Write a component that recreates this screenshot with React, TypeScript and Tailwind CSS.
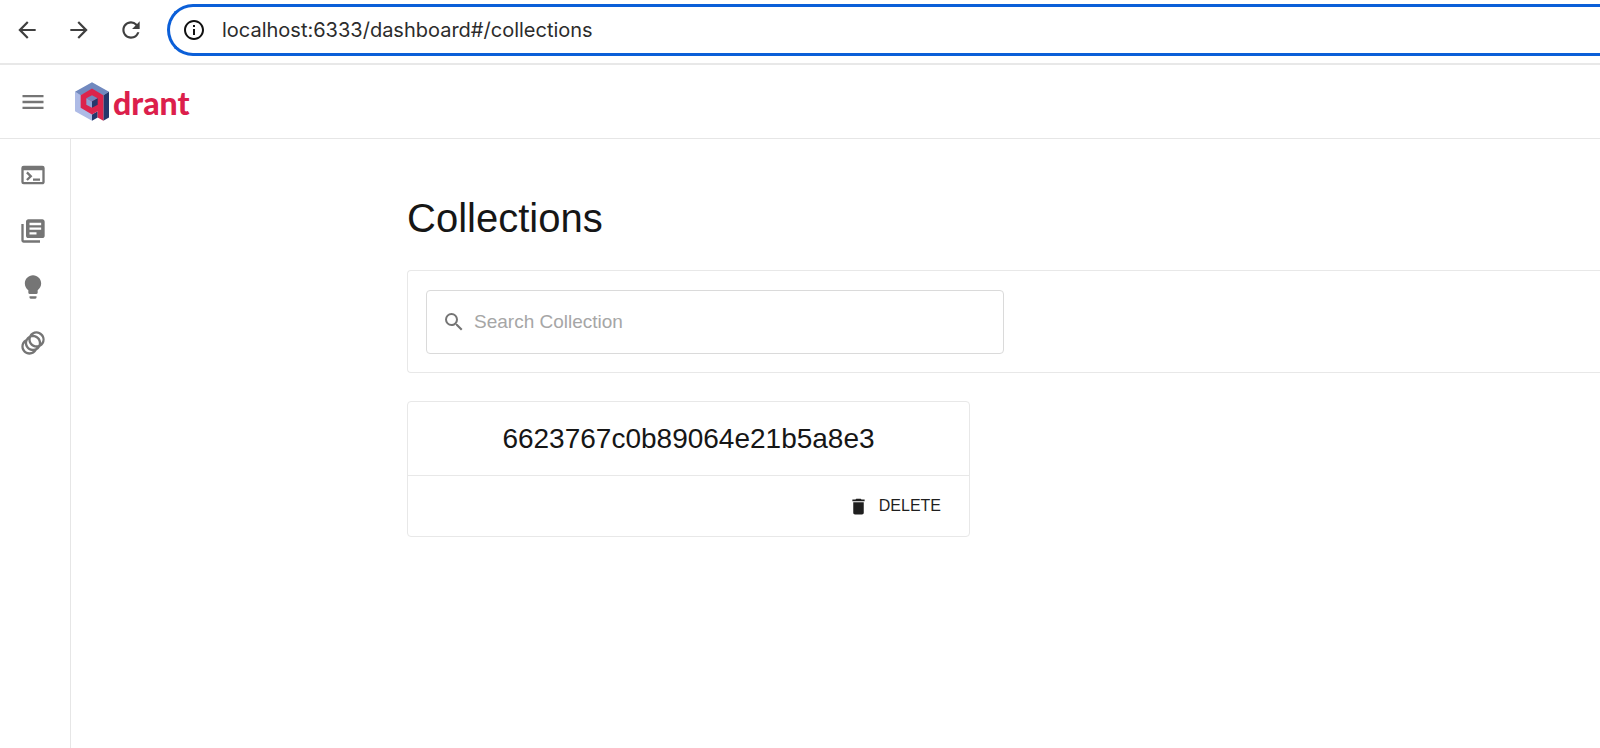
import React, { useState } from 'react'
import type { IconType } from 'react-icons'
import {
  MdAnimation,
  MdArrowBack,
  MdArrowForward,
  MdDelete,
  MdInfoOutline,
  MdLibraryBooks,
  MdLightbulb,
  MdMenu,
  MdOutlineTerminal,
  MdRefresh,
  MdSearch,
} from 'react-icons/md'

interface NavItem {
  label: string
  href: string
  icon: IconType
}

const navItems: NavItem[] = [
  { label: 'Console', href: '#/console', icon: MdOutlineTerminal },
  { label: 'Collections', href: '#/collections', icon: MdLibraryBooks },
  { label: 'Tutorial', href: '#/tutorial', icon: MdLightbulb },
  { label: 'Datasets', href: '#/datasets', icon: MdAnimation },
]

const collections = ['6623767c0b89064e21b5a8e3']

function BrowserBar() {
  const [url, setUrl] = useState('localhost:6333/dashboard#/collections')

  return (
    <div className="flex items-center border-b-2 border-[#e8e8e8] pt-1 pb-[7px] pl-[14px]">
      <div className="flex w-[153px] shrink-0 gap-[26px] text-[#3f3f3f]">
        <button type="button" aria-label="Back">
          <MdArrowBack className="size-[26px]" />
        </button>
        <button type="button" aria-label="Forward">
          <MdArrowForward className="size-[26px]" />
        </button>
        <button type="button" aria-label="Reload">
          <MdRefresh className="size-[26px]" />
        </button>
      </div>
      <div className="flex h-[52px] flex-1 items-center gap-4 rounded-l-full border-[3px] border-r-0 border-[#0b5fd8] pl-3">
        <MdInfoOutline className="size-6 shrink-0 text-[#111]" />
        <input
          type="text"
          aria-label="Address"
          value={url}
          onChange={(e) => setUrl(e.target.value)}
          className="min-w-0 flex-1 bg-transparent font-['Inter',sans-serif] text-[20px] text-[#2c2c2c] outline-none"
        />
      </div>
    </div>
  )
}

function Logo() {
  return (
    <a href="#/" className="flex items-center gap-1">
      <svg viewBox="0 0 102 116" className="h-[39px] w-[34px]" aria-hidden="true">
        <path fill="#aebbe6" d="M0 29 51 58v58L0 87z" />
        <path fill="#7189bf" d="M51 0l51 29-17 10-34-10-34 10L0 29z" />
        <path fill="#24386c" d="M102 29v77l-17 10V39z" />
        <path fill="#24386c" d="M51 97l17-10v19l-17 10z" />
        <path fill="#dc244c" d="M51 19l34 20v77l-17-10V87L51 97 17 77V39z" />
        <path fill="#7189bf" d="M51 39l17 9-17 10-17-10z" />
        <path fill="#8fa2d3" d="M34 48l17 10v19L34 68z" />
        <path fill="#24386c" d="M68 48v20l-17 9V58z" />
      </svg>
      <span className="pt-0.5 font-['Lato',sans-serif] text-[32px] leading-8 font-black text-[#dc1f4c]">
        drant
      </span>
    </a>
  )
}

function Header() {
  return (
    <header className="flex h-[74px] items-center gap-7 border-b border-[#e6e6e6] pl-[19px]">
      <button type="button" aria-label="Toggle menu" className="text-[#757575]">
        <MdMenu className="size-7" />
      </button>
      <Logo />
    </header>
  )
}

function Sidebar() {
  return (
    <nav className="flex w-[71px] shrink-0 flex-col border-r border-[#e6e6e6] py-2">
      {navItems.map(({ label, href, icon: Icon }) => (
        <a
          key={label}
          href={href}
          aria-label={label}
          className="flex h-14 items-center pl-[19px] text-[#757575]"
        >
          <Icon className="size-7" />
        </a>
      ))}
    </nav>
  )
}

function CollectionCard({ name }: { name: string }) {
  return (
    <article className="w-full max-w-[563px] rounded border border-[#e8e8e8]">
      <h2 className="border-b border-[#e8e8e8] py-4 text-center text-[28px] leading-[41px] text-[#161616]">
        {name}
      </h2>
      <div className="flex h-[60px] items-center justify-end pr-7">
        <button type="button" className="flex items-center gap-[10px] text-base text-[#1f1f1f] uppercase">
          <MdDelete className="size-[21px]" />
          Delete
        </button>
      </div>
    </article>
  )
}

export default function App() {
  const [search, setSearch] = useState('')
  const visible = collections.filter((name) => name.includes(search))

  return (
    <div className="flex min-h-screen flex-col overflow-x-hidden bg-white font-['Liberation_Sans',Arial,sans-serif]">
      <BrowserBar />
      <Header />
      <div className="flex flex-1">
        <Sidebar />
        <main className="min-w-0 flex-1 pt-14 pl-[336px]">
          <h1 className="text-[40px] leading-[47px] text-[#161616]">Collections</h1>
          <div className="mt-7 rounded-l border border-r-0 border-[#e8e8e8] pt-[19px] pb-[18px] pl-[18px]">
            <label className="flex h-16 max-w-[578px] items-center gap-2 rounded border border-[#dadada] pl-[15px]">
              <MdSearch className="size-6 text-[#757575]" />
              <input
                type="text"
                aria-label="Search Collection"
                placeholder="Search Collection"
                value={search}
                onChange={(e) => setSearch(e.target.value)}
                className="min-w-0 flex-1 bg-transparent text-[19px] text-[#161616] outline-none placeholder:text-[#a6a6a6]"
              />
            </label>
          </div>
          <div className="mt-7 flex flex-col gap-7">
            {visible.map((name) => (
              <CollectionCard key={name} name={name} />
            ))}
          </div>
        </main>
      </div>
    </div>
  )
}
